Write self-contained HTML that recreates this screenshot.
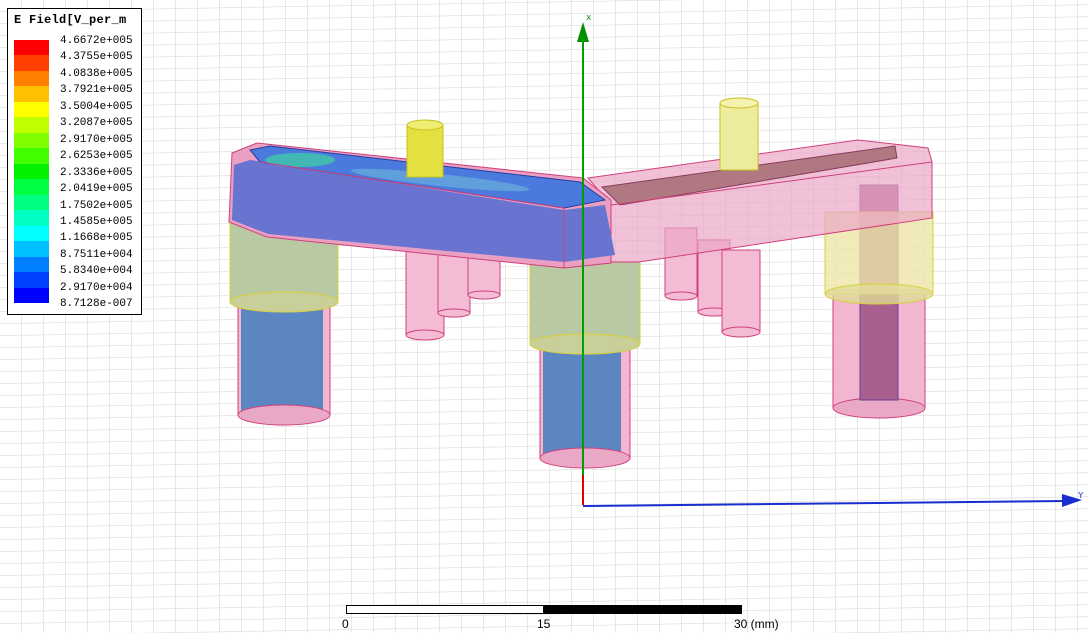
<!DOCTYPE html>
<html><head><meta charset="utf-8"><style>
html,body{margin:0;padding:0;background:#fff;}
#w{position:relative;width:1088px;height:633px;overflow:hidden;background:#fff;font-family:"Liberation Mono",monospace;}
svg{position:absolute;left:0;top:0;}
#leg{position:absolute;left:7px;top:8px;width:133px;height:305px;border:1px solid #000;background:#fff;}
#leg .t{position:absolute;left:6px;top:4px;font-size:12px;font-weight:bold;letter-spacing:0.3px;}
#bar{position:absolute;left:6px;top:31px;width:35px;height:263px;}
#bar div{height:15.47px;}
#lab{position:absolute;left:52px;top:24px;font-size:11px;line-height:16.45px;}
.sc{position:absolute;font-family:"Liberation Sans",sans-serif;font-size:12px;top:617px;}
</style></head><body><div id="w">
<svg width="1088" height="633">
<defs><pattern id="g" width="22" height="12" patternUnits="userSpaceOnUse" patternTransform="skewY(-1)">
<path d="M22 0V12M0 12H22" stroke="#dadada" stroke-width="1.2" fill="none"/></pattern></defs>
<rect width="1088" height="633" fill="url(#g)"/>
<g fill="#f3bcd4" stroke="#d0407c">
<rect x="406" y="250" width="38" height="85"/><ellipse cx="425" cy="335" rx="19" ry="5"/>
<rect x="438" y="245" width="32" height="68"/><ellipse cx="454" cy="313" rx="16" ry="4"/>
<rect x="468" y="245" width="32" height="50"/><ellipse cx="484" cy="295" rx="16" ry="4"/>
<rect x="665" y="228" width="32" height="68"/><ellipse cx="681" cy="296" rx="16" ry="4"/>
<rect x="698" y="240" width="32" height="72"/><ellipse cx="714" cy="312" rx="16" ry="4"/>
<rect x="722" y="250" width="38" height="82"/><ellipse cx="741" cy="332" rx="19" ry="5"/>
</g>
<rect x="238" y="300" width="92" height="115" fill="#f2b6d0" stroke="#d0407c"/>
<rect x="241" y="305" width="82" height="110" fill="#5c86c2"/>
<ellipse cx="284" cy="415" rx="46" ry="10" fill="#e9a8c6" stroke="#d0407c"/>
<rect x="230" y="222" width="108" height="80" fill="#b9c9a4" stroke="#d8d03a"/>
<ellipse cx="284" cy="302" rx="54" ry="10" fill="#c8cf98" stroke="#d8d03a"/>
<rect x="540" y="345" width="90" height="113" fill="#f2b6d0" stroke="#d0407c"/>
<rect x="543" y="350" width="78" height="108" fill="#5c86c2"/>
<ellipse cx="585" cy="458" rx="45" ry="10" fill="#e9a8c6" stroke="#d0407c"/>
<rect x="530" y="262" width="110" height="82" fill="#b9c9a4" stroke="#d8d03a"/>
<ellipse cx="585" cy="344" rx="55" ry="10" fill="#c8cf98" stroke="#d8d03a"/>
<rect x="833" y="290" width="92" height="118" fill="#f2b6d0" stroke="#d0407c"/>
<ellipse cx="879" cy="408" rx="46" ry="10" fill="#e9a8c6" stroke="#d0407c"/>
<rect x="860" y="185" width="38" height="215" fill="#a8608e" stroke="#6a3b9c"/>
<rect x="825" y="212" width="108" height="82" fill="#ece6a8" fill-opacity=".8" stroke="#d8d03a"/>
<ellipse cx="879" cy="294" rx="54" ry="10" fill="#e0dc98" fill-opacity=".8" stroke="#d8d03a"/>
<polygon points="588,178 858,140 928,148 932,162 932,218 639,262 611,262 611,205" fill="#eba6c6" fill-opacity=".7" stroke="#d0407c"/>
<polygon points="602,187 895,146 897,158 620,205" fill="#b07880" stroke="#8a3b5c"/>
<line x1="611" y1="205" x2="932" y2="162" stroke="#d0407c"/>
<polygon points="232,153 257,143 583,178 611,200 611,263 564,268 267,237 229,222" fill="#eaa0c2" stroke="#d0407c"/>
<polygon points="234,165 250,160 564,210 605,205 615,255 564,262 268,234 232,220" fill="#6874d0"/>
<polygon points="250,150 270,146 580,182 605,200 564,208 260,162" fill="#4a7ade" stroke="#2a3aa0"/>
<ellipse cx="300" cy="160" rx="35" ry="7" fill="#40c8a8" fill-opacity=".8"/>
<ellipse cx="440" cy="180" rx="90" ry="6" fill="#70b8d8" fill-opacity=".6" transform="rotate(6 440 180)"/>
<line x1="260" y1="162" x2="564" y2="208" stroke="#d0407c"/>
<line x1="564" y1="208" x2="564" y2="268" stroke="#d0407c"/>
<rect x="407" y="125" width="36" height="52" fill="#e3e040" stroke="#c8c020"/>
<ellipse cx="425" cy="125" rx="18" ry="5" fill="#eeee70" stroke="#c8c020"/>
<rect x="720" y="103" width="38" height="67" fill="#ecec9c" stroke="#c8c020"/>
<ellipse cx="739" cy="103" rx="19" ry="5" fill="#f4f4b0" stroke="#c8c020"/>
<line x1="583" y1="505" x2="583" y2="40" stroke="#00a000" stroke-width="2"/>
<polygon points="577,42 583,22 589,42" fill="#009000"/>
<text x="586" y="20" font-size="9" fill="#009000">x</text>
<line x1="583" y1="475" x2="583" y2="505" stroke="#e00000" stroke-width="2"/>
<line x1="583" y1="506" x2="1065" y2="501" stroke="#1a2ed0" stroke-width="2"/>
<polygon points="1062,494 1082,500 1062,507" fill="#1a2ed0"/>
<text x="1078" y="498" font-size="9" fill="#1a2ed0">Y</text>
<rect x="346.5" y="605.5" width="197" height="8" fill="#fff" stroke="#000"/>
<rect x="543" y="605" width="199" height="9" fill="#000"/>
</svg>
<div id="leg"><div class="t">E Field[V_per_m</div>
<div id="bar">
<div style="background:#f00"></div><div style="background:#ff4000"></div><div style="background:#ff8000"></div><div style="background:#ffc000"></div><div style="background:#ff0"></div><div style="background:#bfff00"></div><div style="background:#80ff00"></div><div style="background:#40ff00"></div><div style="background:#00f000"></div><div style="background:#00ff40"></div><div style="background:#00ff80"></div><div style="background:#00ffc0"></div><div style="background:#0ff"></div><div style="background:#00c0ff"></div><div style="background:#0080ff"></div><div style="background:#0040ff"></div><div style="background:#00f"></div>
</div>
<div id="lab">4.6672e+005<br>4.3755e+005<br>4.0838e+005<br>3.7921e+005<br>3.5004e+005<br>3.2087e+005<br>2.9170e+005<br>2.6253e+005<br>2.3336e+005<br>2.0419e+005<br>1.7502e+005<br>1.4585e+005<br>1.1668e+005<br>8.7511e+004<br>5.8340e+004<br>2.9170e+004<br>8.7128e-007</div>
</div>
<div class="sc" style="left:342px">0</div>
<div class="sc" style="left:537px">15</div>
<div class="sc" style="left:734px">30 (mm)</div>
</div></body></html>
